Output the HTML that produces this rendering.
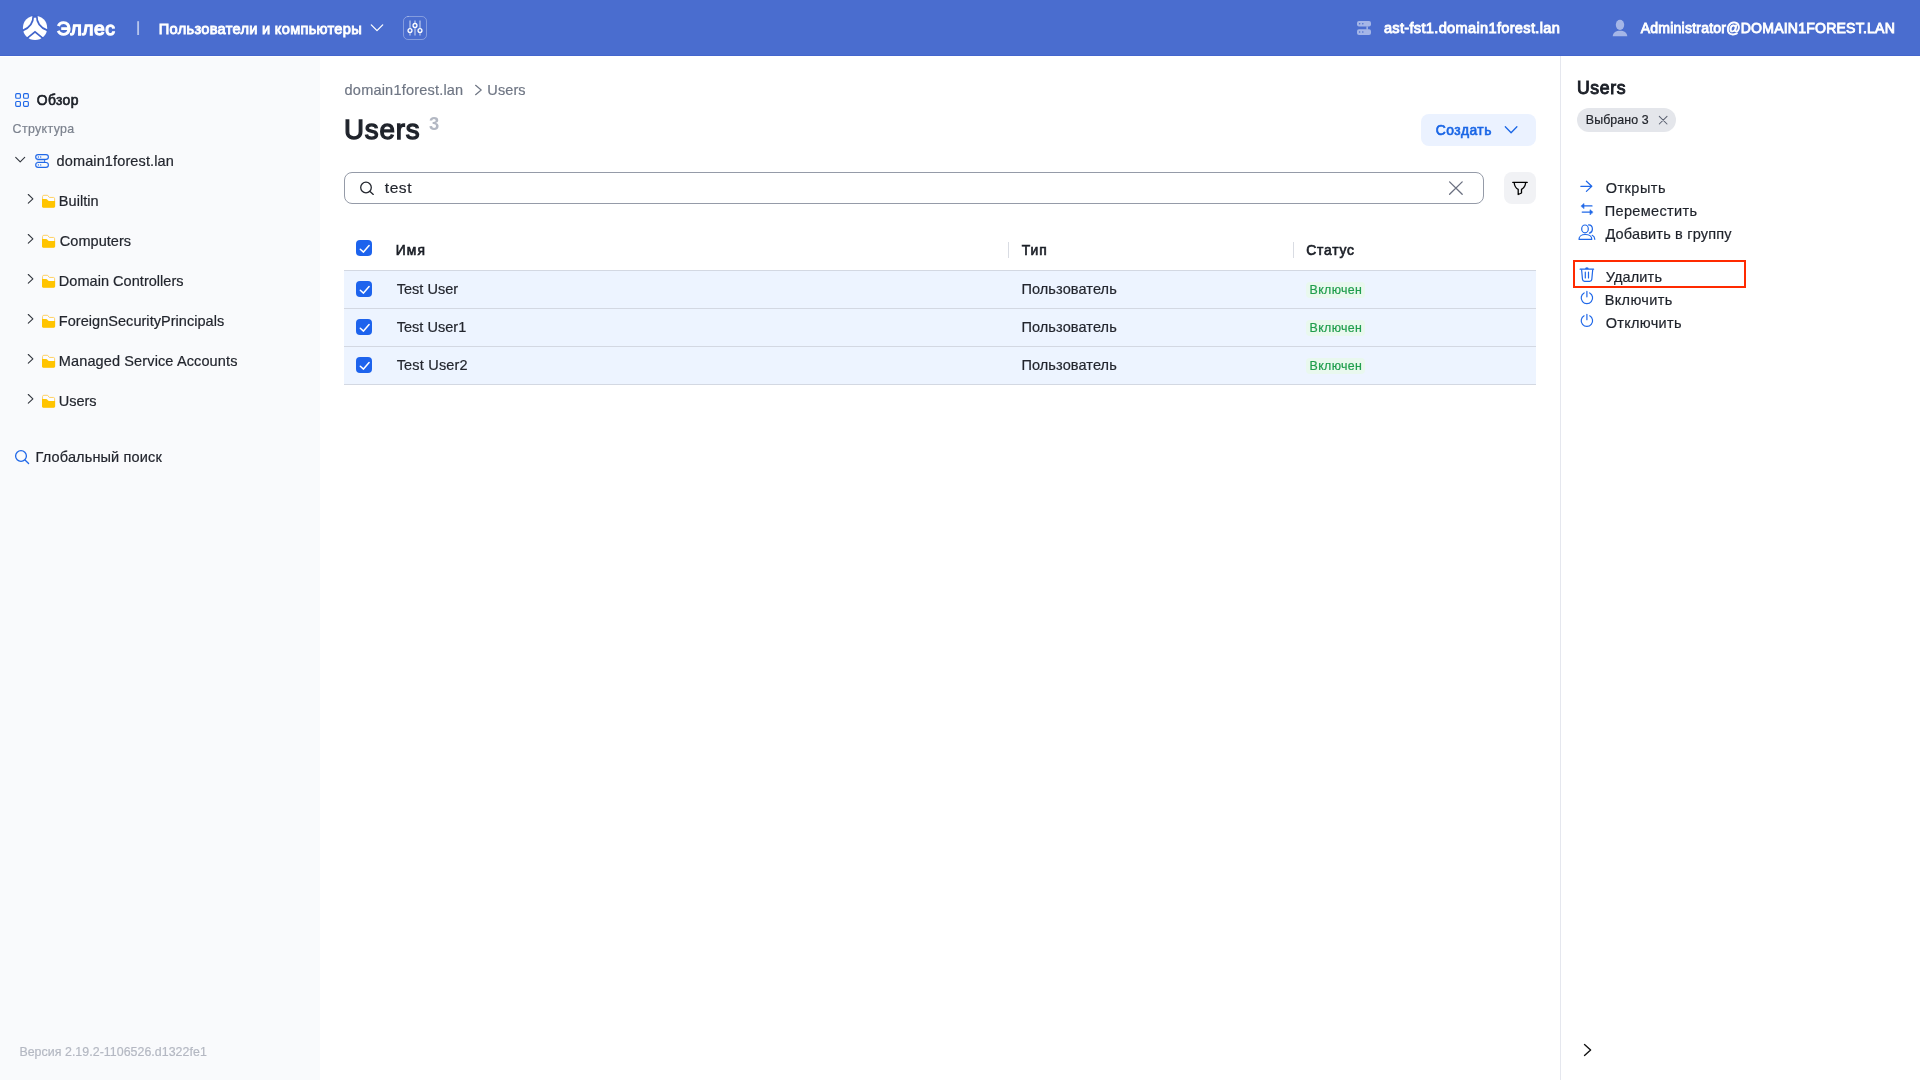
<!DOCTYPE html>
<html lang="ru">
<head>
<meta charset="utf-8">
<title>Эллес — Пользователи и компьютеры</title>
<style>
html,body{margin:0;padding:0;}
body{width:1920px;height:1080px;overflow:hidden;position:relative;background:#fff;font-family:"Liberation Sans",sans-serif;}
.abs{position:absolute;}
.t{position:absolute;white-space:pre;line-height:20px;height:20px;}
#hdr{left:0;top:0;width:1920px;height:55px;background:#4a6dcf;border-bottom:1px solid #4466cd;}
#side{left:0;top:57px;width:320px;height:1023px;background:#f9fafc;}
#main{left:320px;top:56px;width:1240px;height:1024px;background:#fff;}
#rdiv{left:1560px;top:56px;width:1px;height:1024px;background:#e5e7ee;}
#create{left:1421px;top:114px;width:115px;height:32px;border-radius:8px;background:#ebf2ff;}
#search{left:344px;top:172px;width:1138px;height:30px;border:1px solid #959ba8;border-radius:8px;background:#fff;}
#filter{left:1504px;top:172px;width:32px;height:32px;border-radius:8px;background:#f1f2f5;}
.row{left:344px;width:1192px;height:37px;background:#edf4ff;border-bottom:1px solid #d3d8e2;}
#thline{left:344px;top:270px;width:1192px;height:1px;background:#d3d8e2;}
.colsep{top:242px;width:1px;height:16px;background:#d9dce3;}
.cb{width:16px;height:16px;border-radius:4px;background:#1d63ed;left:356px;}
.badge{left:1306px;width:59px;height:16px;border-radius:4px;background:#e9f8ee;}
#chip{left:1577px;top:108px;width:99px;height:24px;border-radius:12px;background:#e4e6eb;}
#redbox{left:1573px;top:260px;width:169px;height:24px;border:2px solid #ff2a00;}
#ic{left:0;top:0;width:1920px;height:1080px;}
</style>
</head>
<body>
<div id="hdr" class="abs"></div>
<div id="side" class="abs"></div>
<div id="main" class="abs"></div>
<div id="rdiv" class="abs"></div>

<div id="create" class="abs"></div>
<div id="search" class="abs"></div>
<div id="filter" class="abs"></div>

<div id="thline" class="abs"></div>
<div class="abs row" style="top:271px"></div>
<div class="abs row" style="top:309px"></div>
<div class="abs row" style="top:347px"></div>
<div class="abs colsep" style="left:1008px"></div>
<div class="abs colsep" style="left:1293px"></div>
<div class="abs cb" style="top:240px"></div>
<div class="abs cb" style="top:281px"></div>
<div class="abs cb" style="top:319px"></div>
<div class="abs cb" style="top:357px"></div>
<div class="abs badge" style="top:282px"></div>
<div class="abs badge" style="top:320px"></div>
<div class="abs badge" style="top:358px"></div>

<div id="chip" class="abs"></div>
<div id="redbox" class="abs"></div>

<div id="txt" class="abs" style="left:0;top:0;width:1920px;height:1080px;will-change:transform;">
<div class="t" style="left:56.85px;top:19.00px;font-size:19.24px;color:#fff;-webkit-text-stroke:1.3px #fff;letter-spacing:0.543px;">Эллес</div>
<div class="t" style="left:158.83px;top:19.00px;font-size:14.61px;color:#fff;-webkit-text-stroke:0.85px #fff;letter-spacing:0.294px;">Пользователи и компьютеры</div>
<div class="t" style="left:1383.92px;top:18.00px;font-size:14.61px;color:#fff;-webkit-text-stroke:0.85px #fff;letter-spacing:0.311px;">ast-fst1.domain1forest.lan</div>
<div class="t" style="left:1640.72px;top:18.00px;font-size:14.09px;color:#fff;-webkit-text-stroke:0.85px #fff;letter-spacing:0.197px;">Administrator@DOMAIN1FOREST.LAN</div>
<div class="t" style="left:36.83px;top:90.00px;font-size:13.85px;color:#1b1f27;-webkit-text-stroke:0.65px #1b1f27;letter-spacing:0.392px;">Обзор</div>
<div class="t" style="left:12.60px;top:119.00px;font-size:12.39px;color:#7b818d;-webkit-text-stroke:0.2px #7b818d;letter-spacing:0.359px;">Структура</div>
<div class="t" style="left:56.60px;top:151.00px;font-size:14.5px;color:#23262e;-webkit-text-stroke:0.2px #23262e;letter-spacing:0.119px;">domain1forest.lan</div>
<div class="t" style="left:58.85px;top:191.00px;font-size:14.5px;color:#23262e;-webkit-text-stroke:0.2px #23262e;letter-spacing:0.029px;">Builtin</div>
<div class="t" style="left:59.85px;top:231.00px;font-size:14.5px;color:#23262e;-webkit-text-stroke:0.2px #23262e;letter-spacing:0.029px;">Computers</div>
<div class="t" style="left:58.85px;top:271.00px;font-size:14.5px;color:#23262e;-webkit-text-stroke:0.2px #23262e;letter-spacing:0.038px;">Domain Controllers</div>
<div class="t" style="left:58.85px;top:311.00px;font-size:14.5px;color:#23262e;-webkit-text-stroke:0.2px #23262e;letter-spacing:0.040px;">ForeignSecurityPrincipals</div>
<div class="t" style="left:58.85px;top:351.00px;font-size:14.5px;color:#23262e;-webkit-text-stroke:0.2px #23262e;letter-spacing:0.123px;">Managed Service Accounts</div>
<div class="t" style="left:58.85px;top:391.00px;font-size:14.5px;color:#23262e;-webkit-text-stroke:0.2px #23262e;letter-spacing:-0.029px;">Users</div>
<div class="t" style="left:35.60px;top:447.00px;font-size:14.5px;color:#23262e;-webkit-text-stroke:0.2px #23262e;letter-spacing:0.147px;">Глобальный поиск</div>
<div class="t" style="left:19.40px;top:1042.00px;font-size:12.39px;color:#b4b8c2;-webkit-text-stroke:0.2px #b4b8c2;letter-spacing:0.044px;">Версия 2.19.2-1106526.d1322fe1</div>
<div class="t" style="left:344.60px;top:80.00px;font-size:14.5px;color:#6f7684;-webkit-text-stroke:0.2px #6f7684;letter-spacing:0.206px;">domain1forest.lan</div>
<div class="t" style="left:487.35px;top:80.00px;font-size:14.5px;color:#6f7684;-webkit-text-stroke:0.2px #6f7684;letter-spacing:0.096px;">Users</div>
<div class="t" style="left:343.95px;top:120.00px;font-size:27.7px;color:#1f232b;-webkit-text-stroke:1.3px #1f232b;letter-spacing:0.861px;">Users</div>
<div class="t" style="left:429.10px;top:114.00px;font-size:18.39px;color:#b3b8c3;font-weight:700;">3</div>
<div class="t" style="left:384.85px;top:178.00px;font-size:15.56px;color:#23262e;-webkit-text-stroke:0.2px #23262e;letter-spacing:0.520px;">test</div>
<div class="t" style="left:1435.83px;top:120.00px;font-size:13.85px;color:#1a66e6;-webkit-text-stroke:0.65px #1a66e6;letter-spacing:0.492px;">Создать</div>
<div class="t" style="left:395.82px;top:240.00px;font-size:13.85px;color:#1b1f27;-webkit-text-stroke:0.65px #1b1f27;letter-spacing:1.091px;">Имя</div>
<div class="t" style="left:1021.83px;top:240.00px;font-size:13.85px;color:#1b1f27;-webkit-text-stroke:0.65px #1b1f27;letter-spacing:0.885px;">Тип</div>
<div class="t" style="left:1306.33px;top:240.00px;font-size:13.85px;color:#1b1f27;-webkit-text-stroke:0.65px #1b1f27;letter-spacing:0.782px;">Статус</div>
<div class="t" style="left:396.70px;top:279.00px;font-size:14.5px;color:#23262e;-webkit-text-stroke:0.2px #23262e;letter-spacing:0.024px;">Test User</div>
<div class="t" style="left:396.70px;top:317.00px;font-size:14.5px;color:#23262e;-webkit-text-stroke:0.2px #23262e;letter-spacing:0.029px;">Test User1</div>
<div class="t" style="left:396.70px;top:355.00px;font-size:14.5px;color:#23262e;-webkit-text-stroke:0.2px #23262e;letter-spacing:0.185px;">Test User2</div>
<div class="t" style="left:1021.40px;top:279.00px;font-size:14.5px;color:#23262e;-webkit-text-stroke:0.2px #23262e;letter-spacing:0.115px;">Пользователь</div>
<div class="t" style="left:1021.40px;top:317.00px;font-size:14.5px;color:#23262e;-webkit-text-stroke:0.2px #23262e;letter-spacing:0.115px;">Пользователь</div>
<div class="t" style="left:1021.40px;top:355.00px;font-size:14.5px;color:#23262e;-webkit-text-stroke:0.2px #23262e;letter-spacing:0.115px;">Пользователь</div>
<div class="t" style="left:1309.60px;top:280.00px;font-size:12.39px;color:#1f9d4c;-webkit-text-stroke:0.2px #1f9d4c;letter-spacing:0.339px;">Включен</div>
<div class="t" style="left:1309.60px;top:318.00px;font-size:12.39px;color:#1f9d4c;-webkit-text-stroke:0.2px #1f9d4c;letter-spacing:0.339px;">Включен</div>
<div class="t" style="left:1309.60px;top:356.00px;font-size:12.39px;color:#1f9d4c;-webkit-text-stroke:0.2px #1f9d4c;letter-spacing:0.339px;">Включен</div>
<div class="t" style="left:1576.97px;top:78.00px;font-size:17.64px;color:#1b1f27;-webkit-text-stroke:0.95px #1b1f27;letter-spacing:0.634px;">Users</div>
<div class="t" style="left:1585.80px;top:110.00px;font-size:12.39px;color:#22252c;-webkit-text-stroke:0.2px #22252c;letter-spacing:0.106px;">Выбрано 3</div>
<div class="t" style="left:1605.70px;top:178.00px;font-size:14.5px;color:#1f232b;-webkit-text-stroke:0.2px #1f232b;letter-spacing:0.468px;">Открыть</div>
<div class="t" style="left:1604.70px;top:201.00px;font-size:14.5px;color:#1f232b;-webkit-text-stroke:0.2px #1f232b;letter-spacing:0.352px;">Переместить</div>
<div class="t" style="left:1605.40px;top:224.00px;font-size:14.5px;color:#1f232b;-webkit-text-stroke:0.2px #1f232b;letter-spacing:0.176px;">Добавить в группу</div>
<div class="t" style="left:1605.70px;top:267.00px;font-size:14.5px;color:#1f232b;-webkit-text-stroke:0.2px #1f232b;letter-spacing:0.149px;">Удалить</div>
<div class="t" style="left:1604.70px;top:290.00px;font-size:14.5px;color:#1f232b;-webkit-text-stroke:0.2px #1f232b;letter-spacing:0.373px;">Включить</div>
<div class="t" style="left:1605.70px;top:313.00px;font-size:14.5px;color:#1f232b;-webkit-text-stroke:0.2px #1f232b;letter-spacing:0.308px;">Отключить</div>
</div>

<svg id="ic" class="abs" viewBox="0 0 1920 1080" fill="none" stroke-linecap="round" stroke-linejoin="round">
<!-- logo -->
<g>
<circle cx="35.05" cy="27.9" r="12.15" fill="#fff"/>
<g stroke="#4164cb" stroke-width="1.7" stroke-linecap="butt">
<path d="M33.32,15.2 C33.4,21 32,27 22.6,30.6"/>
<path d="M36.7,15.2 C36.6,21 38,27 47.5,30.4"/>
<path d="M27,38.4 L35,31.9 L43,38.4" stroke-linejoin="miter"/>
</g>
<path d="M32.6,15 H37.4 L36.3,18.1 L35.1,17.6 L33.9,18.1 Z" fill="#4467cc"/>
</g>
<!-- header divider -->
<rect x="137.2" y="21.2" width="1.85" height="13.8" fill="#fff" fill-opacity=".6"/>
<!-- header chevron -->
<path d="M371.3,24.9 L377,30.6 L382.7,24.9" stroke="#fff" stroke-width="1.3"/>
<!-- sliders button -->
<rect x="403.5" y="16.5" width="23" height="23" rx="4.5" stroke="#fff" stroke-opacity=".32"/>
<g stroke="#fff" stroke-opacity=".55" stroke-width="1.4" stroke-linecap="butt">
<path d="M410,20.4 V35.4 M415,20.4 V35.4 M420,20.4 V35.4"/>
</g>
<g stroke="#fff" stroke-width="1.3" fill="#4a6dcf">
<circle cx="415" cy="25.45" r="1.95"/><circle cx="410" cy="30.5" r="1.95"/><circle cx="420" cy="30.5" r="1.95"/>
</g>
<!-- header server icon -->
<g fill="#fff" fill-opacity=".5">
<rect x="1357" y="21" width="14" height="5.6" rx="2"/>
<rect x="1357" y="29.3" width="14" height="5.7" rx="2"/>
<rect x="1366.4" y="26.6" width="1.5" height="2.7"/>
</g>
<g fill="#4a6dcf">
<circle cx="1359.6" cy="23.8" r=".75"/><circle cx="1362.8" cy="23.8" r=".75"/>
<circle cx="1359.6" cy="32.1" r=".75"/><circle cx="1362.8" cy="32.1" r=".75"/>
</g>
<!-- header user icon -->
<g fill="#fff" fill-opacity=".5">
<ellipse cx="1620" cy="24.8" rx="4.2" ry="5.1"/>
<path d="M1612.7,36.3 C1613,32.6 1616,30.8 1620,30.8 C1624,30.8 1627,32.6 1627.3,36.3 Z"/>
</g>
<!-- grid icon -->
<g stroke="#2068e8" stroke-width="1.15">
<rect x="15.7" y="93.6" width="4.7" height="4.7" rx="1.05"/>
<rect x="23.55" y="93.6" width="4.8" height="4.7" rx="1.05"/>
<rect x="15.7" y="101.5" width="4.7" height="4.8" rx="1.05"/>
<rect x="23.55" y="101.5" width="4.8" height="4.8" rx="1.05"/>
</g>
<!-- tree chevron down -->
<path d="M15.7,157.3 L20.2,161.8 L24.7,157.3" stroke="#33373f" stroke-width="1.1"/>
<!-- domain server icon -->
<g stroke="#2068e8" stroke-width="1.15">
<rect x="35.7" y="154.6" width="12.7" height="4.8" rx="2.4"/>
<rect x="35.7" y="162.5" width="12.7" height="4.8" rx="2.4"/>
<path d="M44.7,159.6 V162.3" stroke-width="1"/>
</g>
<path d="M37.5,161 H44" stroke="#2068e8" stroke-opacity=".3" stroke-width="1.4"/>
<g fill="#2068e8">
<circle cx="38.4" cy="157" r=".65"/><circle cx="40.7" cy="157" r=".65"/>
<circle cx="38.4" cy="164.9" r=".65"/><circle cx="40.7" cy="164.9" r=".65"/>
</g>
<!-- tree rows -->
<defs>
<g id="fold">
<path d="M42.55,206.5 V196.6 Q42.55,195.3 43.85,195.3 H47.6 L49.3,197.45 H53.5 Q54.6,197.45 54.6,198.7 V206.5 Z" fill="#fbfcff" stroke="#ffcf5c" stroke-width="0.95"/>
<path d="M42,198.9 H46 C47.4,198.9 47.8,201.05 49.3,201.05 H55.1 V206.2 Q55.1,207.65 53.7,207.65 H43.4 Q42,207.65 42,206.2 Z" fill="#ffc400" stroke="none"/>
</g>
<path id="chr" d="M28.3,194.5 L32.9,198.8 L28.3,203.1" stroke="#33373f" stroke-width="1.1"/>
</defs>
<use href="#fold"/><use href="#chr"/>
<use href="#fold" y="40"/><use href="#chr" y="40"/>
<use href="#fold" y="80"/><use href="#chr" y="80"/>
<use href="#fold" y="120"/><use href="#chr" y="120"/>
<use href="#fold" y="160"/><use href="#chr" y="160"/>
<use href="#fold" y="200"/><use href="#chr" y="200"/>
<!-- global search icon -->
<g stroke="#2068e8" stroke-width="1.3">
<circle cx="21" cy="456" r="5.4"/><path d="M25,460 L28.6,463.5"/>
</g>
<!-- breadcrumb chevron -->
<path d="M475.6,85.3 L481.2,90 L475.6,94.7" stroke="#6f7684" stroke-width="1.2"/>
<!-- create chevron -->
<path d="M1505.3,126.8 L1511.1,132.7 L1516.9,126.8" stroke="#1a66e6" stroke-width="1.3"/>
<!-- search icon -->
<g stroke="#23262e" stroke-width="1.3">
<circle cx="366" cy="187.5" r="5.3"/><path d="M370,191.4 L373.3,194.4"/>
</g>
<!-- clear X -->
<path d="M1449.6,181.9 L1462.2,194.3 M1462.2,181.9 L1449.6,194.3" stroke="#6b7080" stroke-width="1.3"/>
<!-- funnel -->
<path d="M1512.8,182.4 H1527.2 M1514.2,182.7 C1514.5,186 1516,188.2 1518.2,189.4 V194.5 L1521.5,193 V189.4 C1523.8,188.2 1525.3,186 1525.7,182.7" stroke="#000" stroke-width="1.3"/>
<!-- checkmarks -->
<defs><path id="ck" d="M360.3,249.2 L363.5,252.1 L369.1,245.5" stroke="#fff" stroke-width="1.5"/></defs>
<use href="#ck"/><use href="#ck" y="41"/><use href="#ck" y="79"/><use href="#ck" y="117"/>
<!-- chip X -->
<path d="M1659.3,116.3 L1667,124 M1667,116.3 L1659.3,124" stroke="#5a6070" stroke-width="1.05"/>
<g stroke="#2068e8" stroke-width="1.2">
<!-- arrow right -->
<path d="M1580.8,186.3 H1591.6 M1586.4,181.2 L1591.8,186.3 L1586.4,191.4"/>
<!-- swap -->
<path d="M1592,205.9 H1582.6"/><path d="M1581.2,205.9 L1584,203.5 V208.3 Z" fill="#2068e8" stroke-width=".6"/>
<path d="M1582.2,212.1 H1591.4"/><path d="M1592.8,212.1 L1590,209.7 V214.5 Z" fill="#2068e8" stroke-width=".6"/>
<!-- users -->
<ellipse cx="1585" cy="228.9" rx="3.3" ry="3.9"/>
<path d="M1588.6,224.9 C1591.3,225 1592.4,227 1592.4,228.9 C1592.4,230.8 1591.4,232.6 1589.4,233.1"/>
<path d="M1579,239.3 C1579,236.5 1581.5,234.5 1585.2,234.5 C1589,234.5 1591.8,236.5 1591.8,239.3 Z"/>
<path d="M1592.2,235.3 C1593.8,236 1594.7,237.5 1594.8,239.3"/>
<!-- trash -->
<path d="M1580.1,269.2 H1593.6 M1585.6,269 C1585.6,267.6 1588.2,267.6 1588.2,269"/>
<path d="M1581.6,269.8 L1582.5,279.4 Q1582.7,281.3 1584.6,281.3 H1589.7 Q1591.6,281.3 1591.8,279.4 L1592.7,269.8"/>
<path d="M1585.3,272.2 V278 M1588.5,272.2 V278"/>
<!-- power 1 -->
<path d="M1584.1,292.9 A5.7,5.7 0 1 0 1589.7,292.9 M1586.9,291.4 V296.8"/>
<!-- power 2 -->
<path d="M1584.1,315.8 A5.7,5.7 0 1 0 1589.7,315.8 M1586.9,314.3 V319.7"/>
</g>
<!-- collapse chevron -->
<path d="M1584.5,1044.6 L1590.6,1050 L1584.5,1055.4" stroke="#111" stroke-width="1.4"/>

</svg>
</body>
</html>
